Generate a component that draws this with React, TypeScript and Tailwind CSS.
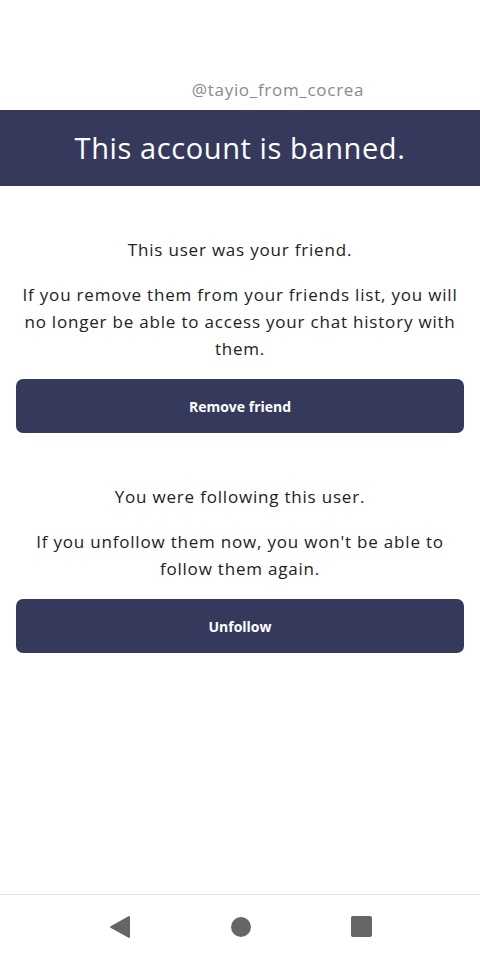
import React from 'react';

function Section({ title, body, action }: { title: string; body: string; action: string }) {
  return (
    <div className="flex flex-col items-center">
      <p className="text-[17px] leading-[27px] tracking-[0.8px] text-[#222222] text-center">{title}</p>
      <p className="mt-[18px] text-[17px] leading-[27px] tracking-[0.8px] text-[#222222] text-center">{body}</p>
      <button className="mt-[17px] w-full h-[54px] rounded-[7px] bg-[#353a5c] text-white text-[14px] font-bold">
        {action}
      </button>
    </div>
  );
}

export default function App() {
  return (
    <div className="w-[480px] h-[960px] bg-white flex flex-col" style={{ fontFamily: '"Open Sans", Lato, sans-serif' }}>
      <div className="h-[110px] flex items-end justify-center pb-[8px]">
        <span className="ml-[76px] text-[17px] tracking-[0.7px] text-[#8a8a8a]">@tayio_from_cocrea</span>
      </div>
      <div className="h-[76px] bg-[#353a5c] flex items-center justify-center">
        <h1 className="text-[29px] tracking-[0.6px] text-white">This account is banned.</h1>
      </div>
      <div className="flex-1 px-4 pt-[50px] flex flex-col gap-[50px]">
        <Section
          title="This user was your friend."
          body="If you remove them from your friends list, you will no longer be able to access your chat history with them."
          action="Remove friend"
        />
        <Section
          title="You were following this user."
          body="If you unfollow them now, you won't be able to follow them again."
          action="Unfollow"
        />
      </div>
      <div className="h-[66px] border-t border-[#e3e6e8] flex items-center justify-center gap-[100px] pb-[2px]">
        <svg width="22" height="24" viewBox="0 0 22 24">
          <path d="M20 2 L20 22 L2 12 Z" fill="#666666" stroke="#666666" strokeWidth="2" strokeLinejoin="round" />
        </svg>
        <div className="w-[20px] h-[20px] rounded-full bg-[#666666]" />
        <div className="w-[21px] h-[21px] rounded-[2px] bg-[#666666]" />
      </div>
    </div>
  );
}
